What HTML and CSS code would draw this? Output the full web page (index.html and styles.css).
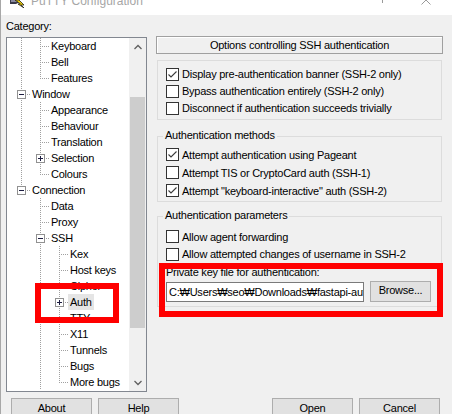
FILE: index.html
```html
<!DOCTYPE html>
<html>
<head>
<meta charset="utf-8">
<title>PuTTY Configuration</title>
<link rel="stylesheet" href="styles.css">
</head>
<body>
<div class="win">
  <div class="titlebar">
    <svg class="appicon" width="16" height="8" viewBox="0 8 16 8">
      <path d="M0 8 H8 V11 L6 12 H0 Z" fill="#3a3a4a"/>
      <path d="M1 8 H7 V10 H1 Z" fill="#8a8aa0"/>
      <path d="M5 8 L9 8 L14 13 L11 13 L14 16 L8 12 L10.5 12 Z" fill="#f2d000" stroke="#222" stroke-width="0.8"/>
    </svg>
    <span class="title">PuTTY Configuration</span>
    <span class="tb-spacer"></span>
    <span class="tb-max"></span>
    <svg class="tb-close" width="10" height="5" viewBox="0 5 10 5">
      <path d="M0.5 9.5 L5 5 L9.5 9.5" fill="none" stroke="#9a9a9a" stroke-width="1"/>
    </svg>
  </div>
  <div class="client">
    <div class="panes">
      <div class="left">
        <div class="cat-label">Category:</div>
        <div class="tree">
          <div class="rows">
            <div class="row"><span class="c v"></span><span class="c t"></span><span class="txt">Keyboard</span></div>
            <div class="row"><span class="c v"></span><span class="c t"></span><span class="txt">Bell</span></div>
            <div class="row"><span class="c v"></span><span class="c l"></span><span class="txt">Features</span></div>
            <div class="row"><span class="c t"><span class="bx minus"></span></span><span class="txt">Window</span></div>
            <div class="row"><span class="c v"></span><span class="c t"></span><span class="txt">Appearance</span></div>
            <div class="row"><span class="c v"></span><span class="c t"></span><span class="txt">Behaviour</span></div>
            <div class="row"><span class="c v"></span><span class="c t"></span><span class="txt">Translation</span></div>
            <div class="row"><span class="c v"></span><span class="c t"><span class="bx plus"></span></span><span class="txt">Selection</span></div>
            <div class="row"><span class="c v"></span><span class="c l"></span><span class="txt">Colours</span></div>
            <div class="row"><span class="c l"><span class="bx minus"></span></span><span class="txt">Connection</span></div>
            <div class="row"><span class="c"></span><span class="c t"></span><span class="txt">Data</span></div>
            <div class="row"><span class="c"></span><span class="c t"></span><span class="txt">Proxy</span></div>
            <div class="row"><span class="c"></span><span class="c t"><span class="bx minus"></span></span><span class="txt">SSH</span></div>
            <div class="row"><span class="c"></span><span class="c v"></span><span class="c t"></span><span class="txt">Kex</span></div>
            <div class="row"><span class="c"></span><span class="c v"></span><span class="c t"></span><span class="txt">Host keys</span></div>
            <div class="row"><span class="c"></span><span class="c v"></span><span class="c t"></span><span class="txt">Cipher</span></div>
            <div class="row"><span class="c"></span><span class="c v"></span><span class="c t"><span class="bx plus"></span></span><span class="txt sel">Auth</span></div>
            <div class="row"><span class="c"></span><span class="c v"></span><span class="c t"></span><span class="txt">TTY</span></div>
            <div class="row"><span class="c"></span><span class="c v"></span><span class="c t"></span><span class="txt">X11</span></div>
            <div class="row"><span class="c"></span><span class="c v"></span><span class="c t"></span><span class="txt">Tunnels</span></div>
            <div class="row"><span class="c"></span><span class="c v"></span><span class="c t"></span><span class="txt">Bugs</span></div>
            <div class="row"><span class="c"></span><span class="c v"></span><span class="c l"></span><span class="txt">More bugs</span></div>
          </div>
          <div class="vscroll">
            <div class="sb-btn">
              <svg width="8" height="6" viewBox="0 0 8 6"><polyline points="0.5,5 4,1.5 7.5,5" fill="none" stroke="#606060" stroke-width="1.3"/></svg>
            </div>
            <div class="sb-track"><div class="sb-thumb"></div></div>
            <div class="sb-btn">
              <svg width="8" height="6" viewBox="0 0 8 6"><polyline points="0.5,1 4,4.5 7.5,1" fill="none" stroke="#606060" stroke-width="1.3"/></svg>
            </div>
          </div>
        </div>
      </div>
      <div class="right">
        <div class="header">Options controlling SSH authentication</div>
        <div class="group g1">
          <div class="chk"><span class="cb"><svg width="11" height="11" viewBox="0 0 11 11"><polyline points="1.5,5.5 4,8 9.5,2.5" fill="none" stroke="#3a3a3a" stroke-width="1.1"/></svg></span>Display pre-authentication banner (SSH-2 only)</div>
          <div class="chk"><span class="cb"></span>Bypass authentication entirely (SSH-2 only)</div>
          <div class="chk"><span class="cb"></span>Disconnect if authentication succeeds trivially</div>
        </div>
        <div class="group g2">
          <div class="legend">Authentication methods</div>
          <div class="chk first"><span class="cb"><svg width="11" height="11" viewBox="0 0 11 11"><polyline points="1.5,5.5 4,8 9.5,2.5" fill="none" stroke="#3a3a3a" stroke-width="1.1"/></svg></span>Attempt authentication using Pageant</div>
          <div class="chk"><span class="cb"></span>Attempt TIS or CryptoCard auth (SSH-1)</div>
          <div class="chk"><span class="cb"><svg width="11" height="11" viewBox="0 0 11 11"><polyline points="1.5,5.5 4,8 9.5,2.5" fill="none" stroke="#3a3a3a" stroke-width="1.1"/></svg></span>Attempt "keyboard-interactive" auth (SSH-2)</div>
        </div>
        <div class="group g3">
          <div class="legend">Authentication parameters</div>
          <div class="chk first"><span class="cb"></span>Allow agent forwarding</div>
          <div class="chk"><span class="cb"></span>Allow attempted changes of username in SSH-2</div>
          <div class="keylabel">Private key file for authentication:</div>
          <div class="keyrow">
            <div class="field">C:₩Users₩seo₩Downloads₩fastapi-auth.ppk</div>
            <button class="btn browse">Browse...</button>
          </div>
        </div>
      </div>
    </div>
    <div class="buttons">
      <button class="btn">About</button>
      <button class="btn help">Help</button>
      <button class="btn open">Open</button>
      <button class="btn cancel">Cancel</button>
    </div>
  </div>
  <div class="mark mark-auth"></div>
  <div class="mark mark-key"></div>
</div>
</body>
</html>
```

FILE: styles.css
```css
* { box-sizing: border-box; }
html, body { margin: 0; padding: 0; }
body {
  width: 452px;
  height: 414px;
  overflow: hidden;
  background: #f0f0f0;
  font-family: "Liberation Sans", Arial, "DejaVu Sans", "Noto Sans CJK KR", sans-serif;
  font-size: 11px;
  letter-spacing: -0.24px;
  color: #000;
}
.win {
  width: 452px;
  height: 414px;
  border-left: 1px solid #a8a8a8;
  position: relative;
  overflow: hidden;
  background: #f0f0f0;
}

/* title bar */
.titlebar {
  height: 15px;
  background: #fff;
  display: flex;
  align-items: flex-start;
  overflow: hidden;
}
.appicon { flex: none; margin-left: 9px; }
.title {
  display: block;
  margin-left: 5px;
  margin-top: -5px;
  font-size: 12px;
  line-height: 12px;
  letter-spacing: 0;
  color: #a6a6a6;
  white-space: nowrap;
}
.tb-spacer { flex: 1; }
.tb-max { flex: none; width: 1px; height: 3px; background: #9a9a9a; }
.tb-close { flex: none; margin-left: 38px; margin-right: 21px; }

/* client */
.client { padding-left: 5px; }
.panes { display: flex; gap: 9px; }
.left { width: 141px; flex: none; }
.cat-label { margin-top: 5px; line-height: 13px; }

.tree {
  margin-top: 4px;
  height: 355px;
  border: 1px solid #828790;
  background: #fff;
  display: flex;
  overflow: hidden;
}
.rows { flex: 1; padding-left: 4px; overflow: hidden; }
.row {
  display: flex;
  height: 16px;
  line-height: 16px;
  white-space: nowrap;
}
.c {
  flex: none;
  width: 19px;
  height: 16px;
  display: flex;
  align-items: flex-start;
}
.v {
  background: repeating-linear-gradient(to bottom, #a0a0a0 0 1px, transparent 1px 2px) 10px 0 / 1px 100% no-repeat;
}
.t {
  background:
    repeating-linear-gradient(to bottom, #a0a0a0 0 1px, transparent 1px 2px) 10px 0 / 1px 100% no-repeat,
    repeating-linear-gradient(to right, #a0a0a0 0 1px, transparent 1px 2px) 10px 8px / 9px 1px no-repeat;
}
.l {
  background:
    repeating-linear-gradient(to bottom, #a0a0a0 0 1px, transparent 1px 2px) 10px 0 / 1px 9px no-repeat,
    repeating-linear-gradient(to right, #a0a0a0 0 1px, transparent 1px 2px) 10px 8px / 9px 1px no-repeat;
}
.bx {
  width: 9px;
  height: 9px;
  margin: 4px 0 0 6px;
  border: 1px solid #919191;
  background: #fff;
}
.bx.minus {
  background: linear-gradient(#1c1c40, #1c1c40) center / 5px 1px no-repeat, #fff;
}
.bx.plus {
  background:
    linear-gradient(#1c1c40, #1c1c40) center / 5px 1px no-repeat,
    linear-gradient(#1c1c40, #1c1c40) center / 1px 5px no-repeat,
    #fff;
}
.txt { padding: 0 2px; color: #000; }
.txt.sel { background: #e5e5e5; }

.vscroll {
  flex: none;
  width: 17px;
  background: #f0f0f0;
  display: flex;
  flex-direction: column;
}
.sb-btn {
  height: 17px;
  display: flex;
  align-items: center;
  justify-content: center;
  flex: none;
}
.sb-track { flex: 1; padding: 42px 1px 0; }
.sb-thumb { height: 231px; background: #cdcdcd; }

/* right side */
.right { width: 287px; flex: none; }
.header {
  margin-top: 21px;
  height: 18px;
  border: 1px solid #a0a0a0;
  box-shadow: inset 1px 1px 0 #fff;
  padding-top: 1px;
  line-height: 15px;
  text-align: center;
  white-space: nowrap;
}
.group {
  margin: 0 1px;
  border: 1px solid #dcdcdc;
}
.g1 { margin-top: 6px; padding: 4.5px 0 2.5px; }
.g1 .chk { height: 17px; }
.g2 { margin-top: 16px; padding-bottom: 1.5px; }
.g2 .chk { height: 18px; }
.g2 .chk.first { margin-top: 3.5px; }
.g3 { margin-top: 14px; padding-bottom: 4px; }
.g3 .chk { height: 17.5px; }
.g3 .chk.first { margin-top: 6px; }
.legend {
  display: table;
  margin: -8px 0 0 5px;
  padding: 0 2px;
  background: #f0f0f0;
  line-height: 13px;
  white-space: nowrap;
}
.chk {
  display: flex;
  align-items: center;
  padding-left: 8px;
  white-space: nowrap;
}
.cb {
  flex: none;
  width: 13px;
  height: 13px;
  margin-right: 3px;
  border: 1px solid #333;
  background: #fff;
  display: flex;
}
.keylabel {
  margin: 3px 0 0 8px;
  line-height: 13px;
  white-space: nowrap;
}
.keyrow {
  display: flex;
  align-items: center;
  height: 21px;
  margin-top: 2px;
  padding-left: 8px;
}
.field {
  flex: none;
  width: 198px;
  height: 20px;
  border: 1px solid #7a7a7a;
  background: #fff;
  padding-left: 2px;
  line-height: 18px;
  overflow: hidden;
  white-space: nowrap;
}
.btn {
  flex: none;
  width: 81px;
  height: 23px;
  border: 1px solid #adadad;
  background: #e1e1e1;
  font: inherit;
  letter-spacing: inherit;
  color: #000;
  line-height: 19px;
  padding: 0 0 2px;
  margin: 0;
}
.btn.browse {
  width: 61px;
  height: 21px;
  margin-left: 6px;
  line-height: 17px;
}

.buttons {
  display: flex;
  margin-top: 6px;
  padding: 0 12px 0 5px;
}
.btn.help { margin-left: 6px; }
.btn.open { margin-left: auto; }
.btn.cancel { margin-left: 6px; }

/* annotation overlays */
.mark {
  position: absolute;
  border: 6px solid #ff0000;
}
.mark-auth { left: 34px; top: 283px; width: 84px; height: 40px; }
.mark-key { left: 158px; top: 263px; width: 284px; height: 54px; }
```
